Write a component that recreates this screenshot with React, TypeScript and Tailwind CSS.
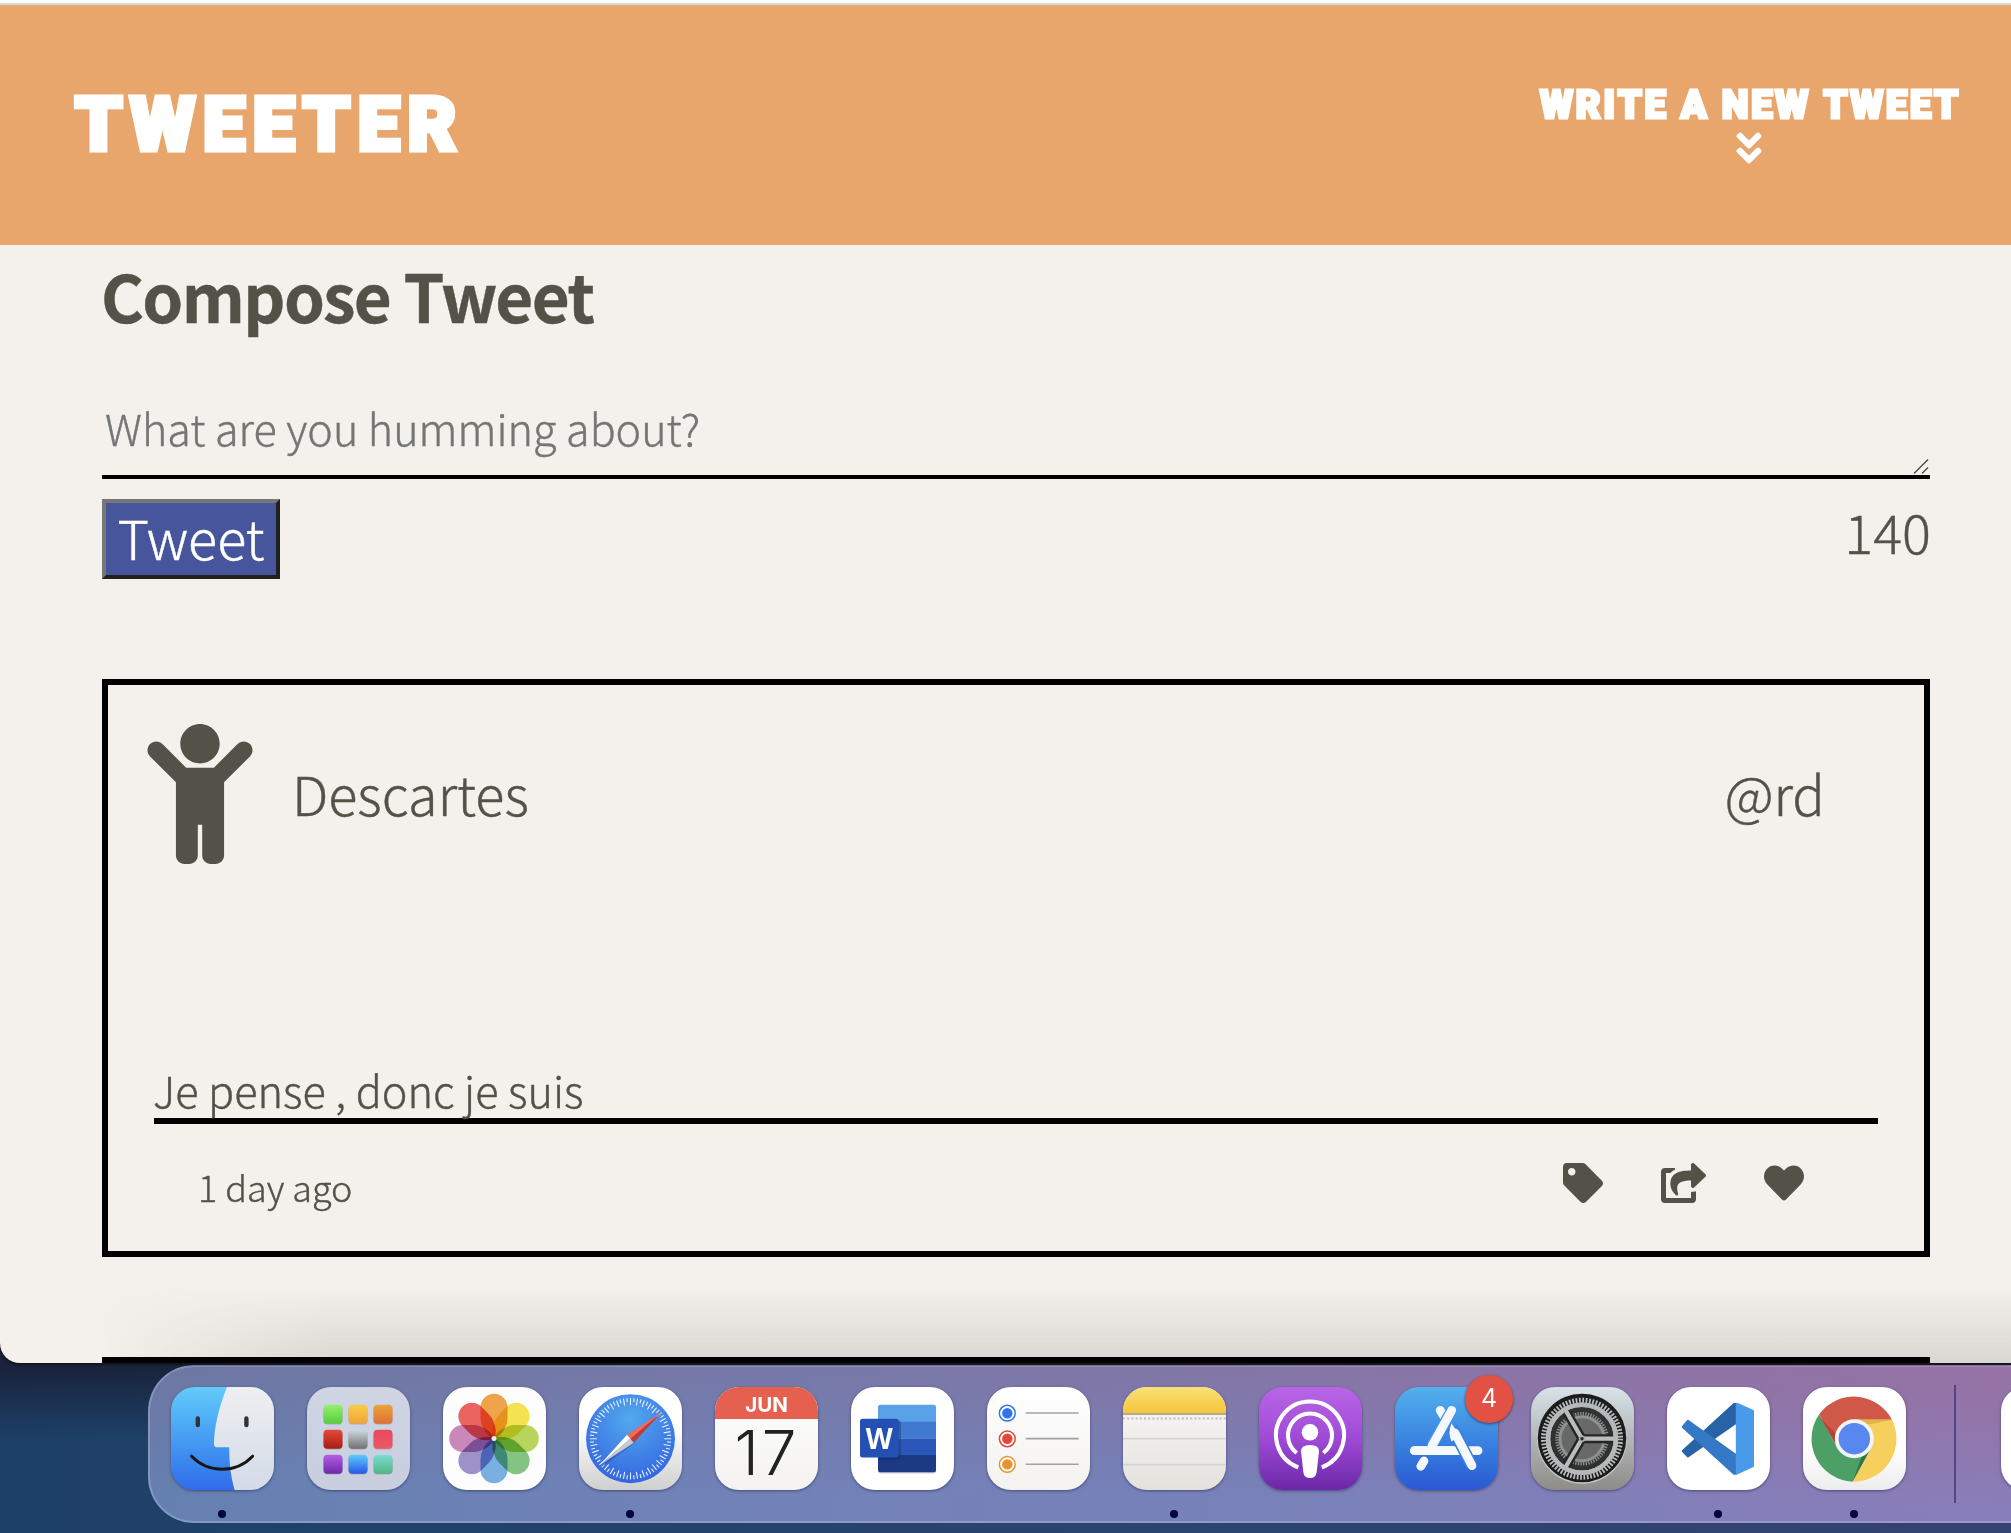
import type { ReactNode } from "react";
import { FaAngleDoubleDown, FaChild, FaHeart, FaShareSquare, FaTag } from "react-icons/fa";

const sans = "font-['Noto_Sans_CJK_SC',sans-serif]";

function Header() {
  return (
    <header className="flex h-[242px] items-start justify-between border-t-2 border-[#d9d9dd] bg-[#e8a66c] pr-[51px] pl-[75px] font-[Roboto,sans-serif] font-black text-white">
      <h1 className="mt-[78px] text-[75px] leading-[82px] tracking-[7.8px] [font-kerning:none] [stroke-linejoin:round] [-webkit-text-stroke:5px_white]">
        TWEETER
      </h1>
      <div className="mt-[78px] flex w-[422px] flex-col items-center">
        <span className="mr-[-3px] text-[38px] leading-[44px] tracking-[2.8px] whitespace-nowrap [font-kerning:none] [stroke-linejoin:round] [-webkit-text-stroke:3px_white]">
          WRITE A NEW TWEET
        </span>
        <FaAngleDoubleDown className="mt-px size-[40px]" />
      </div>
    </header>
  );
}

function Compose() {
  return (
    <section>
      <h2 className="-ml-px mt-[10px] text-[65.5px] leading-[80px] font-bold tracking-[-1.6px]">Compose Tweet</h2>
      <div className="relative mt-[58px] h-[86px] border-b-4 border-black bg-[#f2f1eb] pt-1 pl-[3px] text-[43.1px] leading-[60px] font-light text-[#757575]">
        What are you humming about?
        <svg className="absolute right-0 bottom-0 h-[18px] w-[18px]" viewBox="0 0 18 18" stroke="#4a4a4a" strokeWidth="1.4">
          <path d="M2 16.5 16 2.5M10 16.5l6-6" />
        </svg>
      </div>
      <div className="mt-[20px] flex h-[80px] items-start justify-between">
        <button className="flex h-[80px] w-[178px] justify-center border-4 border-t-[#767676] border-r-[#212121] border-b-[#212121] border-l-[#767676] bg-[#46559c] text-[54px] leading-[67px] font-light text-white">
          Tweet
        </button>
        <output className="-mr-px text-[54px] leading-[64px] font-light">140</output>
      </div>
    </section>
  );
}

function TweetCard() {
  return (
    <article className="mt-[100px] h-[578px] border-6 border-black px-[39px] pt-[39px] font-light">
      <div className="flex h-[141px] items-start">
        <FaChild className="h-[140px] w-[106px]" />
        <span className="mt-[29px] ml-[39px] text-[54px] leading-[80px]">Descartes</span>
        <span className="mt-[29px] mr-[60px] ml-auto text-[54px] leading-[80px]">@rd</span>
      </div>
      <p className="mx-[7px] mt-[194px] h-[65px] border-b-6 border-black text-[43.2px] leading-[60px]">
        <span className="-ml-px">Je pense , donc je suis</span>
      </p>
      <div className="mt-[37px] flex items-start pr-[81px] pl-[51px]">
        <time className="text-[36px] leading-[50px]">1 day ago</time>
        <div className="mt-[2px] ml-auto flex">
          <FaTag className="size-[40px]" />
          <FaShareSquare className="ml-[58px] h-[40px] w-[45px]" />
          <FaHeart className="ml-[58px] size-[40px]" />
        </div>
      </div>
    </article>
  );
}

function Tile({ children, bg, dot, badge }: { children?: ReactNode; bg: string; dot?: boolean; badge?: string }) {
  return (
    <div className="relative mr-[33px] flex h-[136px] w-[103px] shrink-0 flex-col items-center">
      <div className={`h-[103px] w-[103px] overflow-hidden rounded-[24px] shadow-[0_1px_3px_rgba(20,20,60,0.5)] ${bg}`}>
        <svg viewBox="0 0 103 103" className="block size-full">
          {children}
        </svg>
      </div>
      {dot && <i className="mt-[20px] mr-px size-2 rounded-full bg-[#03023a]" />}
      {badge && (
        <span className="absolute -top-[12px] left-[70px] flex size-[48px] items-center justify-center rounded-full bg-[#e35145] font-[Inter,sans-serif] text-[25px] text-white shadow-[0_1px_3px_rgba(0,0,0,0.5)]">
          {badge}
        </span>
      )}
    </div>
  );
}

function Finder() {
  return (
    <Tile bg="bg-linear-to-b from-[#63cbf9] to-[#326bea]" dot>
      <defs>
        <linearGradient id="face" x1="0" y1="0" x2="0" y2="1">
          <stop stopColor="#efeff1" />
          <stop offset="1" stopColor="#d3dbe7" />
        </linearGradient>
      </defs>
      <path d="M56 0C48 20 43 40 43 57q0 3.3 3 3.3h12.2Q58 84 63.6 103H103V0Z" fill="url(#face)" />
      <g fill="none" stroke="#171717" strokeLinecap="round">
        <path d="M26.8 31.5v6.5M75.4 31.5v6.5" strokeWidth="4.4" stroke="#333" />
        <path d="M20.6 69.2q12.4 13 30.6 13t30.4-13" strokeWidth="3" />
      </g>
    </Tile>
  );
}

const launchColors = [
  ["#96f06d", "#59cc3c"], ["#f6cd48", "#f0a43a"], ["#eda23a", "#dd7033"],
  ["#e5493a", "#a91c14"], ["#cdd9df", "#717171"], ["#e9495e", "#ec5964"],
  ["#b35fe4", "#6e27ab"], ["#5dccfb", "#2a55e6"], ["#7fdcd3", "#4fb681"],
];

function Launchpad() {
  return (
    <Tile bg="bg-linear-to-b from-[#d0d5e4] to-[#c9cedf]">
      {launchColors.map(([a, b], i) => (
        <g key={i}>
          <linearGradient id={`lp${i}`} x1="0" y1="0" x2="0" y2="1">
            <stop stopColor={a} />
            <stop offset="1" stopColor={b} />
          </linearGradient>
          <rect x={16.5 + (i % 3) * 25} y={18.6 + Math.floor(i / 3) * 25} width="19" height="19" rx="4" fill="#0003" />
          <rect x={16.5 + (i % 3) * 25} y={17.7 + Math.floor(i / 3) * 25} width="19" height="19" rx="4" fill={`url(#lp${i})`} />
        </g>
      ))}
    </Tile>
  );
}

const petals = ["#f09a37", "#f5e13f", "#b3d24d", "#78bf75", "#6baae0", "#9386c6", "#c67bb5", "#ea5550"];

function Photos() {
  return (
    <Tile bg="bg-[#fdfdfd]">
      {petals.map((c, i) => (
        <path
          key={c}
          d="M51 51.5Q44 50 39.500 39.500Q37.500 36 37.500 31V20.200a13.500 13.500 0 0 1 27 0V31Q64.500 36 62.500 39.500Q58 50 51 51.500Z"
          fill={c}
          fillOpacity="0.9"
          className="mix-blend-multiply"
          transform={`rotate(${i * 45} 51 51.5)`}
        />
      ))}
      <circle cx="51" cy="51.500" r="2.500" fill="#eee8de" />
    </Tile>
  );
}

function Safari() {
  return (
    <Tile bg="bg-linear-to-b from-white from-40% to-[#cfcfcf]" dot>
      <radialGradient id="sea" cx="0.5" cy="0.28" r="0.75">
        <stop stopColor="#53a9ee" />
        <stop offset="1" stopColor="#3263e0" />
      </radialGradient>
      <circle cx="51.500" cy="51.700" r="44.500" fill="url(#sea)" />
      {Array.from({ length: 72 }, (_, i) => (
        <path
          key={i}
          d={i % 2 ? "M51.500 11v4" : "M51.500 11v7"}
          stroke="#e6f0fd"
          strokeWidth="1.100"
          transform={`rotate(${i * 5} 51.500 51.700)`}
        />
      ))}
      <path d="M22 81 49 49l7 7Z" fill="#1b3d8f" opacity=".3" />
      <path d="M83 25 48 47.700l3.400 4Z" fill="#ef6a5b" />
      <path d="M83 25 54.700 55.700l-3.300-4Z" fill="#c43b31" />
      <path d="M20.700 78 48 47.700l3.400 4Z" fill="#fff" />
      <path d="M20.700 78 54.700 55.700l-3.300-4Z" fill="#c9c9cc" />
    </Tile>
  );
}

function Calendar() {
  return (
    <Tile bg="bg-linear-to-b from-white to-[#f3f2f0]">
      <rect width="103" height="32" fill="#e5604f" />
      <text x="51.500" y="24.800" textAnchor="middle" fontFamily="Inter, sans-serif" fontWeight="700" fontSize="20.500" fill="#fff">
        JUN
      </text>
      <text x="50.500" y="87.500" textAnchor="middle" fontFamily="Inter, sans-serif" fontWeight="300" fontSize="62" fill="#222" textLength="62">
        17
      </text>
    </Tile>
  );
}

function Word() {
  return (
    <Tile bg="bg-white">
      <clipPath id="page">
        <rect x="27" y="17.700" width="58" height="67.500" rx="2.500" />
      </clipPath>
      <rect x="27" y="19" width="58" height="67.500" rx="2.500" fill="#0003" />
      <g clipPath="url(#page)">
        <rect x="27" y="17" width="58" height="18" fill="#5aa2e8" />
        <rect x="27" y="34.700" width="58" height="17" fill="#4079cf" />
        <rect x="27" y="51.700" width="58" height="17" fill="#2b57b8" />
        <rect x="27" y="68" width="58" height="18" fill="#1c3a84" />
        <rect x="25" y="33" width="25" height="40" rx="3" fill="#0a1d54" opacity=".3" />
      </g>
      <rect x="9" y="31.700" width="38.700" height="38.700" rx="2.500" fill="#2450b3" />
      <text x="28.300" y="61.700" textAnchor="middle" fontFamily="Open Sans, sans-serif" fontWeight="700" fontSize="28.500" fill="#fff" textLength="27" lengthAdjust="spacingAndGlyphs">
        W
      </text>
    </Tile>
  );
}

function Reminders() {
  return (
    <Tile bg="bg-linear-to-b from-white to-[#f3f2ef]">
      {["#2f74ee", "#e2483a", "#e9932f"].map((c, i) => (
        <g key={c}>
          <circle cx="20.300" cy={26.200 + i * 25.600} r="7.900" fill="#fff" stroke={c} strokeWidth="1.500" />
          <circle cx="20.300" cy={26.200 + i * 25.600} r="5.200" fill={c} />
          <path d={`M38.700 ${26 + i * 25.600}h53`} stroke="#a2a1a8" strokeWidth="1.600" />
        </g>
      ))}
    </Tile>
  );
}

function Notes() {
  return (
    <Tile bg="bg-linear-to-b from-[#faf9f8] to-[#e3e2dd]" dot>
      <linearGradient id="pad" x1="0" y1="0" x2="0" y2="1">
        <stop stopColor="#fae077" />
        <stop offset="1" stopColor="#f5c63c" />
      </linearGradient>
      <rect width="103" height="26" fill="url(#pad)" />
      <path d="M0 27h103" stroke="#b5aa91" strokeWidth="2" />
      <path d="M0 31.500h103" stroke="#bdbdbd" strokeWidth="1.800" strokeDasharray="2 2.200" />
      <path d="M0 51.700h103M0 77.700h103" stroke="#d3d2d2" strokeWidth="1.800" />
    </Tile>
  );
}

function Podcasts() {
  return (
    <Tile bg="bg-linear-to-b from-[#b965e6] via-[#9f4ad6] to-[#6b27a6]">
      <g fill="none" stroke="#fff" strokeWidth="4">
        <path d="M39.300 80.300A34 34 0 1 1 62.700 80.300" />
        <path d="M37.700 66A22 22 0 1 1 64.300 66" />
      </g>
      <circle cx="51" cy="45.300" r="8.300" fill="#fff" />
      <path d="M42 64q0-6 9-6t9 6l-2.300 21q-.7 6-6.700 6t-6.700-6Z" fill="#fff" />
    </Tile>
  );
}

function AppStore() {
  return (
    <Tile bg="bg-linear-to-b from-[#53b0ed] to-[#2b57d3]" badge="4">
      <g fill="none" stroke="#f5f8fc" strokeWidth="8.800" strokeLinecap="round">
        <path d="M45.200 23.300 51 33" />
        <path d="M19.500 63.700H83" />
        <path d="M57 40.500 77 78.700" stroke="#3b80e1" strokeWidth="12" strokeLinecap="butt" />
        <path d="M60 46 77 78.700" />
        <path d="M56.700 23.300 36 59" stroke="#4793e6" strokeWidth="11" strokeLinecap="butt" />
        <path d="M56.700 23.300 37 59" />
        <path d="M19.500 63.700H57" />
        <path d="M29 74 25.800 79.300" />
      </g>
      <path d="M56.500 36.500q4 5 8 13l-8 5q-4-9 0-18Z" fill="#f5f8fc" />
    </Tile>
  );
}

function Settings() {
  return (
    <Tile bg="bg-linear-to-b from-[#d8e3e9] to-[#8e8c88]">
      <circle cx="51" cy="51.700" r="45" fill="#c9cccd" />
      <circle cx="51" cy="51" r="44.300" fill="#1b1c1c" />
      <circle cx="51" cy="51.700" r="38.500" fill="none" stroke="#b9bcbc" strokeWidth="5" strokeDasharray="1.800 1.560" />
      <circle cx="51" cy="51.700" r="34" fill="#303232" stroke="#b5b9ba" strokeWidth="4.500" />
      <circle cx="51" cy="51.700" r="25" fill="none" stroke="#8b8e8e" strokeWidth="3.500" strokeDasharray="1.400 1.217" />
      <circle cx="51" cy="51.700" r="22" fill="#686966" stroke="#8e9191" strokeWidth="3" />
      <g stroke="#242626" strokeWidth="9">
        <path d="M51 51.700h31M51 51.700 35.500 24.900M51 51.700 35.500 78.500" />
      </g>
      <g stroke="#b9bdbe" strokeWidth="4.200">
        <path d="M51 51.700h33M51 51.700 34.500 23.100M51 51.700 34.500 80.300" />
      </g>
      <circle cx="51" cy="51.700" r="34" fill="none" stroke="#b5b9ba" strokeWidth="4.500" />
      <circle cx="51" cy="51.700" r="2.500" fill="#2c2d2d" stroke="#aaadad" strokeWidth="1.500" />
    </Tile>
  );
}

function Code() {
  return (
    <Tile bg="bg-white" dot>
      <g strokeLinejoin="round" strokeWidth="2">
        <path d="M67 17 15.700 64 21 69.500 69 36V17Z" fill="#2763a6" stroke="#2763a6" />
        <path d="M21 33.700 15.700 40 67 86.700h2V68Z" fill="#3478c6" stroke="#3478c6" />
        <path d="M69.800 16.700 86 24v55l-16.200 7.700Z" fill="#4a9aea" stroke="#4a9aea" />
      </g>
    </Tile>
  );
}

function Chrome() {
  return (
    <Tile bg="bg-linear-to-b from-white from-60% to-[#ececec]" dot>
      <path d="M89 32.700A43 43 0 0 0 16 27.500L34.500 61 51.300 32.700Z" fill="#d05848" />
      <path d="M16 27.500A43 43 0 0 0 49.700 94.700L68.100 61.400H34.500Z" fill="#4c9f65" />
      <path d="M89 32.700A43 43 0 0 1 49.700 94.700L68.100 61.400 51.300 32.700Z" fill="#f7cf5d" />
      <path d="M51.300 32.700H89l-25 5Z" fill="#c79a3a" opacity=".5" />
      <path d="m34.500 61-18-31L34 48Z" fill="#8d2f26" opacity=".45" />
      <path d="M49.700 94.700 68 61l-9 8Z" fill="#215a34" opacity=".6" />
      <circle cx="51.300" cy="51.700" r="19.500" fill="#f3f4f4" />
      <circle cx="51.300" cy="51.700" r="15.700" fill="#5787ef" />
    </Tile>
  );
}

function Dock() {
  return (
    <nav className="mt-[2px] ml-[148px] flex h-[158px] w-[2300px] rounded-[46px] bg-[radial-gradient(ellipse_1300px_150px_at_1950px_0px,rgba(163,112,164,0.65),transparent),linear-gradient(to_bottom,rgba(125,105,140,0.4),transparent_80%),linear-gradient(to_right,#6480b0,#7082b8_500px,#7881b9_1100px,#887eb9_1800px)] pt-[22px] pl-[23px] inset-ring-2 inset-ring-white/20">
      <Finder />
      <Launchpad />
      <Photos />
      <Safari />
      <Calendar />
      <Word />
      <Reminders />
      <Notes />
      <Podcasts />
      <AppStore />
      <Settings />
      <Code />
      <Chrome />
      <i className="mt-[-2px] mr-[45px] ml-[15px] h-[118px] w-[2px] shrink-0 bg-[#574482]" />
      <Tile bg="bg-white" />
    </nav>
  );
}

export default function App() {
  return (
    <div className={`h-[1533px] w-[2011px] overflow-hidden bg-[linear-gradient(to_bottom,rgba(24,28,48,0.85)_1363px,transparent_1440px),linear-gradient(to_right,#1d4068,#2b4470_60%,#344270)] text-[#545149] ${sans}`}>
      <div className="relative h-[1363px] overflow-hidden rounded-bl-[20px] bg-[#f4f0eb] pt-[3px] shadow-[0_2px_2px_#17131f]">
        <div className="absolute inset-x-0 top-0 h-[3px] bg-white" />
        <Header />
        <main className="mr-[81px] ml-[102px] [-webkit-text-stroke:0.4px]">
          <Compose />
          <TweetCard />
          <div className="relative z-10 mt-[100px] h-[100px] border-6 border-black" />
        </main>
        <div className="absolute right-0 bottom-0 left-[100px] h-[75px] bg-linear-to-b from-transparent to-[#d8d7d1] [mask-image:linear-gradient(to_right,transparent,black_230px)]" />
      </div>
      <Dock />
    </div>
  );
}
